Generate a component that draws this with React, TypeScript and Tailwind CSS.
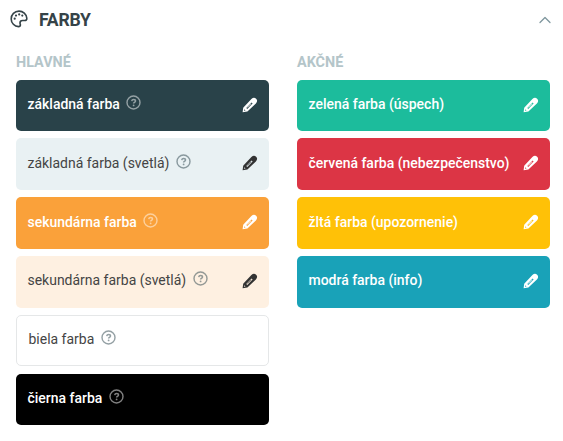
import { ChevronUp } from "lucide-react"
import clsx from "clsx"

type Swatch = {
  label: string
  className: string
  light?: boolean
  hint?: boolean
  editable?: boolean
}

const mainColors: Swatch[] = [
  { label: "základná farba", className: "bg-[#294249]", hint: true, editable: true },
  { label: "základná farba (svetlá)", className: "bg-[#e9f1f3]", light: true, hint: true, editable: true },
  { label: "sekundárna farba", className: "bg-[#faa13a]", hint: true, editable: true },
  { label: "sekundárna farba (svetlá)", className: "bg-[#fef0e1]", light: true, hint: true, editable: true },
  { label: "biela farba", className: "bg-white border border-[#e5e7e8]", light: true, hint: true },
  { label: "čierna farba", className: "bg-black", hint: true },
]

const actionColors: Swatch[] = [
  { label: "zelená farba (úspech)", className: "bg-[#1cbc9c]", editable: true },
  { label: "červená farba (nebezpečenstvo)", className: "bg-[#dc3545]", editable: true },
  { label: "žltá farba (upozornenie)", className: "bg-[#ffc107]", editable: true },
  { label: "modrá farba (info)", className: "bg-[#19a2b8]", editable: true },
]

function PaletteIcon() {
  return (
    <svg width="18" height="18" viewBox="0 0 18 18" fill="none" className="text-[#354348]">
      <path
        d="M9 1.100C4.500 1.100 1.200 4.700 1.200 8.900s3.300 7.700 7.300 7.700c1.300 0 1.900-.6 1.900-1.500 0-.6-.4-1.200-.4-2.200 0-1.500 1-2.400 2.500-2.400h2.200c1.500 0 2.300-.8 2.100-2.400C16.400 4.200 13.100 1.100 9 1.100Z"
        stroke="currentColor"
        strokeWidth="1.6"
      />
      <g fill="currentColor">
        <circle cx="4.700" cy="8.700" r="1.100" />
        <circle cx="6" cy="5.600" r="1.100" />
        <circle cx="9.200" cy="4.400" r="1.100" />
        <circle cx="12.300" cy="5.600" r="1.100" />
      </g>
    </svg>
  )
}

function HintIcon({ className }: { className?: string }) {
  return (
    <svg width="16" height="16" viewBox="0 0 16 16" fill="none" stroke="currentColor" className={className}>
      <circle cx="7.500" cy="7.500" r="6.500" strokeWidth="1.400" />
      <path d="M5.700 6.100c.2-1 .9-1.600 1.900-1.600 1.100 0 1.900.6 1.900 1.500 0 1.300-1.900 1.300-1.900 2.500" strokeWidth="1.500" />
      <circle cx="7.600" cy="10.400" r=".9" fill="currentColor" stroke="none" />
    </svg>
  )
}

function PencilIcon() {
  return (
    <svg width="16" height="16" viewBox="0 0 16 16" fill="none">
      <path
        fill="currentColor"
        fillRule="evenodd"
        d="M.6 15.200 1.200 10.700 9.400 2.100c1.700-1.700 3.300-1.600 4.700-.4 1.400 1.300 1.400 3-.2 4.700L5.400 14.500ZM2 13.700l1.500-.3-1.200-1.200ZM4.300 10.900l1 1L10.600 6.600l-1-1Z"
      />
      <path d="m5.600 10.600 3.700-3.700" stroke="currentColor" strokeWidth=".7" />
    </svg>
  )
}

function SwatchItem({ data }: { data: Swatch }) {
  const { label, className, light, hint, editable } = data

  return (
    <li
      className={clsx(
        "flex h-[51.7px] items-start justify-between rounded-[5px] pr-[11px] pl-[11.5px]",
        light ? "font-normal text-[#444444]" : "font-medium text-white",
        className
      )}
    >
      <span
        className={clsx(
          "flex items-start text-[13.97px] leading-[21px]",
          editable ? "pt-[14.400px]" : light ? "pt-[13px]" : "pt-[14px]"
        )}
      >
        {label}
        {hint && (
          <HintIcon
            className={clsx(
              "mt-px ml-[6.500px]",
              light ? "text-[#294249]/50" : "text-white/50"
            )}
          />
        )}
      </span>
      {editable && (
        <span className={clsx("pt-[17px]", light && "text-[#333333]")}>
          <PencilIcon />
        </span>
      )}
    </li>
  )
}

function SwatchGroup({ title, items }: { title: string; items: Swatch[] }) {
  return (
    <section className="w-[253px]">
      <h3 className="h-[27.600px] pt-px text-[14.4px] leading-5 font-bold text-[#b4c5c9]">{title}</h3>
      <ul className="flex flex-col gap-[7.100px]">
        {items.map((item) => (
          <SwatchItem key={item.label} data={item} />
        ))}
      </ul>
    </section>
  )
}

export default function App() {
  return (
    <main className="h-[441px] w-[563px] bg-white font-[Roboto,sans-serif]">
      <header className="flex h-[52px] items-start justify-between pt-[9px] pr-2.5 pl-2.5">
        <h2 className="flex items-start gap-[11px] pt-px text-[17.6px] leading-[21px] font-bold tracking-[-0.2px] text-[#354348]">
          <PaletteIcon />
          FARBY
        </h2>
        <ChevronUp size={20} strokeWidth={1.5} className="mt-px mr-[-1.500px] text-[#7f979e]" />
      </header>
      <div className="flex gap-7 pl-4">
        <SwatchGroup title="HLAVNÉ" items={mainColors} />
        <SwatchGroup title="AKČNÉ" items={actionColors} />
      </div>
    </main>
  )
}
